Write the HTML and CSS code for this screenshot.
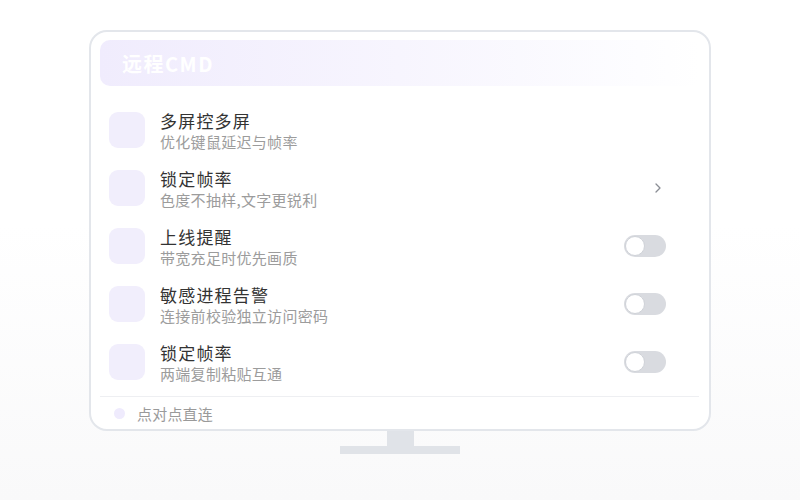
FILE: index.html
```html
<!DOCTYPE html>
<html lang="zh">
<head>
<meta charset="utf-8">
<link rel="stylesheet" href="styles.css">
</head>
<body>
<div class="stage">
  <div class="monitor">
    <div class="header"><span class="title">远程CMD</span></div>
    <div class="list">
      <div class="row">
        <div class="icon"></div>
        <div class="text"><div class="t">多屏控多屏</div><div class="s">优化键鼠延迟与帧率</div></div>
      </div>
      <div class="row">
        <div class="icon"></div>
        <div class="text"><div class="t">锁定帧率</div><div class="s">色度不抽样,文字更锐利</div></div>
        <svg class="chev" width="6" height="10" viewBox="0 0 6 10"><polyline points="1,1 5,5 1,9" fill="none" stroke="#8a8d94" stroke-width="1.3" stroke-linecap="round" stroke-linejoin="round"/></svg>
      </div>
      <div class="row">
        <div class="icon"></div>
        <div class="text"><div class="t">上线提醒</div><div class="s">带宽充足时优先画质</div></div>
        <div class="toggle"><span class="knob"></span></div>
      </div>
      <div class="row">
        <div class="icon"></div>
        <div class="text"><div class="t">敏感进程告警</div><div class="s">连接前校验独立访问密码</div></div>
        <div class="toggle"><span class="knob"></span></div>
      </div>
      <div class="row">
        <div class="icon"></div>
        <div class="text"><div class="t">锁定帧率</div><div class="s">两端复制粘贴互通</div></div>
        <div class="toggle"><span class="knob"></span></div>
      </div>
    </div>
    <div class="footer"><span class="dot"></span><span class="ftext">点对点直连</span></div>
  </div>
  <div class="neck"></div>
  <div class="base"></div>
</div>
</body>
</html>
```
FILE: styles.css
```css
html, body {
  margin: 0;
  padding: 0;
}
body {
  width: 800px;
  height: 500px;
  background: linear-gradient(180deg, #ffffff 0%, #ffffff 45%, #f9f9fa 100%);
  font-family: "Noto Sans CJK SC", "Noto Sans", sans-serif;
  overflow: hidden;
}
.stage {
  display: flex;
  flex-direction: column;
  align-items: center;
  padding-top: 30px;
}
.monitor {
  width: 622px;
  box-sizing: border-box;
  border: 2px solid #e3e6eb;
  border-radius: 18px;
  background: #ffffff;
  padding: 8px 10px 0 9px;
  display: flex;
  flex-direction: column;
}
.header {
  height: 46px;
  border-radius: 10px;
  background: linear-gradient(90deg, #f0ecfd 0%, #f7f5fe 50%, #fdfdff 90%, #ffffff 100%);
  display: flex;
  align-items: center;
  padding-left: 22px;
}
.title {
  color: #ffffff;
  font-size: 20px;
  font-weight: 700;
  letter-spacing: 1.5px;
}
.list {
  margin-top: 15px;
  display: flex;
  flex-direction: column;
}
.row {
  height: 58px;
  display: flex;
  align-items: center;
  padding-left: 9px;
  padding-right: 33px;
}
.icon {
  width: 36px;
  height: 36px;
  border-radius: 9px;
  background: #f1eefc;
  flex: none;
}
.text {
  margin-left: 15px;
  flex: 1;
  display: flex;
  flex-direction: column;
  padding-top: 2px;
}
.t {
  font-size: 17px;
  line-height: 22px;
  color: #333333;
  letter-spacing: 1.2px;
}
.s {
  font-size: 15px;
  line-height: 20px;
  color: #9c9c9c;
  letter-spacing: 0.3px;
}
.chev {
  margin-right: 5px;
}
.toggle {
  width: 42px;
  height: 22px;
  border-radius: 11px;
  background: #d9dbe0;
  position: relative;
  flex: none;
}
.knob {
  position: absolute;
  left: 1px;
  top: 1px;
  width: 18px;
  height: 18px;
  border-radius: 50%;
  background: #ffffff;
  border: 1px solid #cfd2d8;
}
.footer {
  margin-top: 5px;
  border-top: 1px solid #eeeff2;
  height: 32px;
  display: flex;
  align-items: center;
  padding-left: 14px;
}
.dot {
  width: 11px;
  height: 11px;
  border-radius: 50%;
  background: #efebfd;
}
.ftext {
  margin-left: 12px;
  font-size: 15px;
  color: #9a9a9a;
  letter-spacing: 0.2px;
}
.neck {
  width: 27px;
  height: 15px;
  background: #e0e3e8;
}
.base {
  width: 120px;
  height: 8px;
  background: #e0e3e8;
}
```
